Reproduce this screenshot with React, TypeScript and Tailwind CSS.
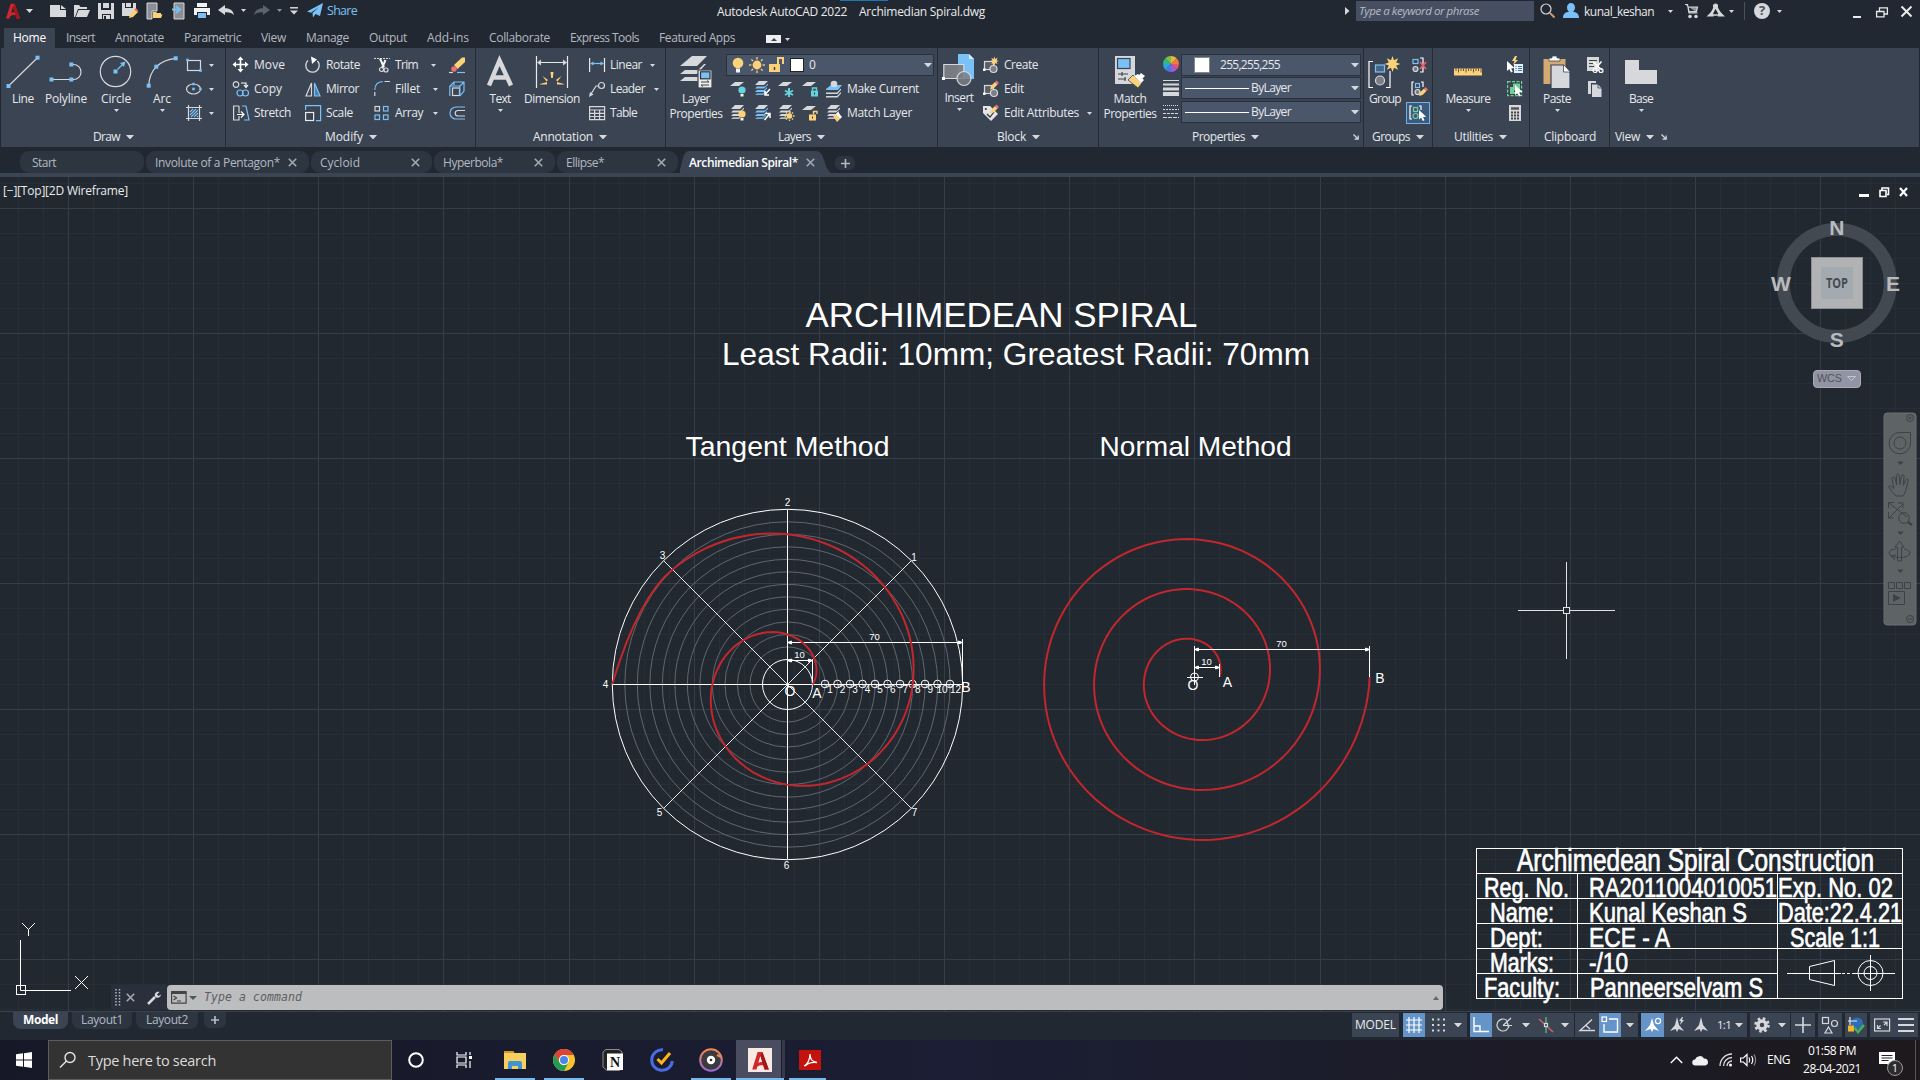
import React, { useLayoutEffect, useRef, useState } from "react";

const BLUE = "#7ac1f8";
const GREY = "#d6d8db";
const YEL = "#fbd27a";

/* Single-line label whose tracking is fitted to a given width. */
function T({ w, className = "", children }: { w?: number; className?: string; children: string }) {
  const ref = useRef<HTMLSpanElement>(null);
  const [track, setTrack] = useState(0);
  useLayoutEffect(() => {
    if (!w || !ref.current) return;
    const natural = ref.current.getBoundingClientRect().width;
    setTrack((w - natural) / children.length);
  }, [w, children]);
  return (
    <span ref={ref} className={`inline-block shrink-0 whitespace-nowrap ${className}`} style={{ letterSpacing: track }}>
      {children}
    </span>
  );
}

function Svg({ w = 16, h = 16, className = "", children }: { w?: number; h?: number; className?: string; children: React.ReactNode }) {
  return (
    <svg width={w} height={h} viewBox={`0 0 ${w} ${h}`} fill="none" stroke={GREY} strokeWidth="1.2" className={`block shrink-0 overflow-visible ${className}`}>
      {children}
    </svg>
  );
}

function Down({ className = "", s = 6 }: { className?: string; s?: number }) {
  return (
    <svg width={s} height={s / 2 + 0.5} viewBox="0 0 8 4" preserveAspectRatio="none" className={`block shrink-0 ${className}`}>
      <path d="M0 0H8L4 4z" fill="#d6d8db" />
    </svg>
  );
}

const Dot = ({ x, y, s = 4 }: { x: number; y: number; s?: number }) => (
  <rect x={x - s / 2} y={y - s / 2} width={s} height={s} fill={BLUE} stroke="none" />
);

/* ---------- title bar ---------- */

function ALogo({ w = 14, h = 16, className = "" }: { w?: number; h?: number; className?: string }) {
  return (
    <svg width={w} height={h} viewBox="0 0 14 16" className={`block shrink-0 ${className}`}>
      <path d="M0 15.5 4.6 0.8h4L14 15.5h-3.6l-1-3.4c-2-.4-3.4 0-5 1l-.8 2.4zM5.2 9.8c1.2-.6 2.2-.7 3.4-.5L6.9 4z" fill="#d0262d" />
      <path d="M8.6.8 14 15.5h-3.6L6.9 4z" fill="#a3161c" />
    </svg>
  );
}

function TitleBar() {
  return (
    <div className="relative flex h-7 items-start pt-[3px]">
      <ALogo className="ml-[6px]" />
      <Down className="ml-[6px] mt-[6px]" s={7} />
      <Svg className="ml-[17px]">
        <path d="M0 2h10v5h6v7H0z M11 2l5 4h-5z" fill={GREY} stroke="none" />
      </Svg>
      <Svg className="ml-2">
        <path d="M0 14V2h5l1.500 2H13v2H4L1 14z M4.600 7H16l-3 7H1.800z" fill={GREY} stroke="none" />
      </Svg>
      <Svg className="ml-2">
        <path d="M0 0h3v7h10V0h3v16h-3v-5H4v5H0z M5 0h6v5H5z M5 12h7v4H5z" fill={GREY} stroke="none" />
        <rect x="6" y="13" width="2" height="3" fill="#222831" stroke="none" />
      </Svg>
      <Svg className="ml-2">
        <path d="M0 0h3v5h8V0h3v8l-6 5H0z M4 0h5v4H4z" fill={GREY} stroke="none" />
        <path d="M7 15l1-4 5-5 3 3-5 5z" fill={YEL} stroke="none" />
        <path d="M12.500 6.500l1.500-1.500 2.500 3-1.500 1z" fill="#e96a6a" stroke="none" />
      </Svg>
      <Svg className="ml-[9px]">
        <path d="M0 0h10v8H5v8H0z" fill="#8b8e93" stroke={GREY} strokeWidth="1" />
        <path d="M6 15V9h3l1 1h4v1.500h1.500L14 15z" fill={YEL} stroke="none" />
      </Svg>
      <Svg className="ml-[9px]" w={13}>
        <path d="M2 0h10v16H2z" fill="#8b8e93" stroke={GREY} strokeWidth="1" />
        <path d="M0 6.500h6M4 3l4 3.500L4 10" stroke={BLUE} strokeWidth="2" />
      </Svg>
      <Svg className="ml-[9px]">
        <path d="M3 0h10v4H3z M0 5h16v7h-3V9H3v3H0z" fill="#f2f3f4" stroke="none" />
        <path d="M4 10h8v5H4z" fill={BLUE} stroke="none" />
      </Svg>
      <Svg className="ml-2">
        <path d="M0 7l7-5v3.200c5 0 8 2 9 7-2-2.600-5-3.200-9-3V12z" fill={GREY} stroke="none" />
      </Svg>
      <Down className="ml-[7px] mt-[6px]" s={5} />
      <Svg className="ml-2">
        <path d="M16 7L9 2v3.200c-5 0-8 2-9 7 2-2.600 5-3.200 9-3V12z" fill="#5d636c" stroke="none" />
      </Svg>
      <Down className="ml-[7px] mt-[6px] opacity-60" s={5} />
      <Svg className="ml-2 mt-[4px]" w={8} h={8}>
        <path d="M0 .8h8" strokeWidth="1.500" />
        <path d="M0 3.500h8L4 7.500z" fill={GREY} stroke="none" />
      </Svg>
      <Svg className="ml-[9px]">
        <path d="M0 8.500L16 0l-3 13-4.500-2L6 14.500 5.500 10 12 4 4 9.800z" fill={BLUE} stroke="none" />
      </Svg>
      <T w={30} className="ml-1 text-[12.5px] leading-4 text-[#7ac1f8]">Share</T>
      <T w={130} className="ml-[360px] text-[12px] leading-[18px] text-[#e8eaec]">Autodesk AutoCAD 2022</T>
      <T w={126} className="ml-3 text-[12px] leading-[18px] text-[#e8eaec]">Archimedian Spiral.dwg</T>
      <Svg className="ml-[360px] mt-[4px]" w={5} h={8}>
        <path d="M0 0l4.500 4L0 8z" fill={GREY} stroke="none" />
      </Svg>
      <div className="-mt-[2px] ml-[6px] flex h-5 w-[178px] items-center bg-[#464f61] pl-[3px]">
        <T w={120} className="text-[11.5px] italic text-[#b6bbc4]">Type a keyword or phrase</T>
      </div>
      <Svg className="ml-1.5">
        <circle cx="6" cy="6" r="5" />
        <path d="M10 10l4.500 4.500" stroke="#c59a74" strokeWidth="2" />
      </Svg>
      <Svg className="ml-[7px]">
        <path d="M4 4.500a4 4.500 0 0 1 8 0c0 2-1 3.500-2 4.200 3.500.6 6 1.800 6 6.300H0C0 10.500 2.500 9.300 6 8.700 5 8 4 6.500 4 4.500z" fill={BLUE} stroke="none" />
      </Svg>
      <T w={70} className="ml-[5px] text-[12px] leading-[18px] text-[#e8eaec]">kunal_keshan</T>
      <Down className="ml-[14px] mt-[7px]" s={5} />
      <Svg className="ml-3">
        <path d="M0 1.500h2.500L4 10h8.500M3 4h9.500l-1 4.500H4z" fill="#8f949b" />
        <circle cx="5" cy="13.500" r="1.200" fill={GREY} />
        <circle cx="11" cy="13.500" r="1.200" fill={GREY} />
      </Svg>
      <Svg className="ml-[7px]">
        <path d="M7.500 3L3 12M7.500 3l5 9" strokeWidth="2.600" />
        <path d="M2 12h11" strokeWidth="1.500" />
        <path d="M0 13l4-4 1 4zM15.500 13l-4-4-1 4z" fill={GREY} />
        <circle cx="7.500" cy="3" r="2" fill={GREY} />
      </Svg>
      <Down className="ml-[5px] mt-[7px]" s={5} />
      <div className="-mt-px ml-[10px] h-[18px] w-px bg-[#4a515d]" />
      <div className="ml-[9px] flex size-4 items-center justify-center rounded-full bg-[#d6d8db] text-[13px] font-bold text-[#4a515d]">?</div>
      <Down className="ml-[7px] mt-[7px]" s={5} />
      <div className="ml-[71px] mt-[13px] h-[2px] w-2 bg-[#e8eaec]" />
      <Svg className="ml-[15px] mt-[4px]" w={12} h={11}>
        <path d="M3.500 4V.8H11.400V7H8M.6 4.500H8v5.400H.6z" stroke="#e8eaec" strokeWidth="1.300" />
      </Svg>
      <Svg className="ml-[13px] mt-[3px]" w={11} h={11}>
        <path d="M.5.5l10 10M10.500.5l-10 10" stroke="#e8eaec" strokeWidth="2" />
      </Svg>
      <div className="absolute left-[840px] top-0 h-px w-12 bg-[#1f74b5]" />
    </div>
  );
}

const MENU: [string, number][] = [
  ["Insert", 29], ["Annotate", 49], ["Parametric", 57], ["View", 25], ["Manage", 43], ["Output", 38],
  ["Add-ins", 42], ["Collaborate", 61], ["Express Tools", 69], ["Featured Apps", 76],
];

function MenuTabs() {
  return (
    <div className="flex h-5 items-center pl-1">
      <div className="flex h-5 w-[51px] items-center justify-center bg-[#3b4453]">
        <T w={33} className="text-[12px] text-white">Home</T>
      </div>
      <div className="ml-[11px] flex gap-5">
        {MENU.map(([t, w]) => (
          <T key={t} w={w} className="text-[12px] text-[#b4b9c1]">{t}</T>
        ))}
      </div>
      <div className="ml-[31px] mt-[2px] flex h-2 w-[15px] items-center justify-center bg-[#eceef0]">
        <svg width="6" height="3" viewBox="0 0 6 3"><path d="M0 3L3 0l3 3z" fill="#444" /></svg>
      </div>
      <Down className="ml-1 mt-[2px]" s={5} />
    </div>
  );
}

/* ---------- ribbon ---------- */

function Panel({ w, title, tw, pad, arrow = true, launch, children }: { w: string; title: string; tw: number; pad: string; arrow?: boolean; launch?: string; children: React.ReactNode }) {
  return (
    <div className={`flex h-[99px] shrink-0 flex-col border-r border-[#252b35] ${w}`}>
      <div className="flex h-20 items-start">{children}</div>
      <div className={`flex h-[18px] items-center ${pad}`}>
        <T w={tw} className="text-[12px] text-[#e6e8eb]">{title}</T>
        {arrow && <Down className="ml-1.5" s={8} />}
        {launch && (
          <Svg w={6} h={6} className={launch}>
            <path d="M.5.5l4 4M5.200 1.500v3.700H1.500" strokeWidth="1.200" />
          </Svg>
        )}
      </div>
    </div>
  );
}

function Big({ w, label, lw, arrow, className = "", children }: { w: string; label: string[]; lw: number[]; arrow?: boolean; className?: string; children: React.ReactNode }) {
  return (
    <div className={`flex shrink-0 flex-col items-center pt-2 ${w} ${className}`}>
      <Svg w={32} h={32}>{children}</Svg>
      <div className="mt-[3px] flex flex-col items-center">
        {label.map((l, i) => (
          <T key={l} w={lw[i]} className="text-[12px] leading-[15px] text-[#e6e8eb]">{l}</T>
        ))}
      </div>
      {arrow && <Down className="mt-[3px]" s={5} />}
    </div>
  );
}

function Col({ className = "", children }: { className?: string; children: React.ReactNode }) {
  return <div className={`flex shrink-0 flex-col pt-[5px] ${className}`}>{children}</div>;
}

function Row({ label, lw, arrow, children }: { label?: string; lw?: number; arrow?: string; children: React.ReactNode }) {
  return (
    <div className="flex h-6 items-center">
      <Svg>{children}</Svg>
      {label && <T w={lw} className="ml-[5px] text-[12px] text-[#e6e8eb]">{label}</T>}
      {arrow && <Down className={arrow} s={5} />}
    </div>
  );
}

const Sheet = ({ y = 2, c = GREY }: { y?: number; c?: string }) => (
  <path d={`M0 ${y + 4}l5-4h9l-5 4z`} fill={c} stroke="none" />
);
const Sheets = ({ c = GREY }: { c?: string }) => (
  <g stroke="none">
    <path d="M1 4l4-4h9l-4 4z" fill={GREY} />
    <path d="M1 7.500L3 5.500h8l3-3v1.500L10 7.500zM1 11L3 9h7l3-3v1.600L10 11z" fill={c} />
    <path d="M1 14l2-1.700h6L12 9.500V11L9 14z" fill={c} opacity=".8" />
  </g>
);
const Star = ({ x, y, r }: { x: number; y: number; r: number }) => {
  const pts = Array.from({ length: 16 }, (_, i) => {
    const q = i % 2 ? r * 0.5 : r;
    const a = (i * Math.PI) / 8;
    return `${x + q * Math.sin(a)},${y - q * Math.cos(a)}`;
  }).join(" ");
  return <polygon points={pts} fill={YEL} stroke="none" />;
};
const Pencil = ({ x, y }: { x: number; y: number }) => (
  <g transform={`translate(${x} ${y})`} stroke="none">
    <path d="M0 9l1-3.500L5 1.500l2.500 2.500-4 4z" fill={YEL} />
    <path d="M5 1.500L6.500 0 9 2.500 7.500 4z" fill="#ee7070" />
  </g>
);
const Cursor = ({ x, y, s = 1 }: { x: number; y: number; s?: number }) => (
  <path transform={`translate(${x} ${y}) scale(${s})`} d="M0 0v10l2.300-2L4 11.500l1.800-.8L4.200 7.400 7.500 7z" fill="#fff" stroke="none" />
);
const Bulb = ({ x, y, c }: { x: number; y: number; c: string }) => (
  <g stroke="none">
    <circle cx={x} cy={y} r="3.600" fill={c} />
    <rect x={x - 1.5} y={y + 4} width="3" height="2.500" fill="#f2f3f4" />
  </g>
);
const Lock = ({ x, y, c, open }: { x: number; y: number; c: string; open?: boolean }) => (
  <g>
    <rect x={x} y={y + 3} width="7" height="6" fill={c} stroke="none" />
    <path d={open ? `M${x + 4.5} ${y + 3}V${y}h3.500v2.500` : `M${x + 1.5} ${y + 3}V${y + 0.5}h4V${y + 3}`} stroke={c} strokeWidth="1.400" />
    <rect x={x + 3} y={y + 5} width="1" height="2" fill="#333" stroke="none" />
  </g>
);
const Sun = ({ x, y, r, c = YEL }: { x: number; y: number; r: number; c?: string }) => (
  <g stroke={c}>
    <circle cx={x} cy={y} r={r * 0.55} fill={c} stroke="none" />
    {[0, 45, 90, 135, 180, 225, 270, 315].map((a) => (
      <path key={a} d={`M${x} ${y - r}v${r * 0.3}`} transform={`rotate(${a} ${x} ${y})`} strokeWidth="1.300" />
    ))}
  </g>
);

function Combo({ className = "", children }: { className?: string; children: React.ReactNode }) {
  return <div className={`flex items-center border border-[#2a313c] bg-[#4a566a] ${className}`}>{children}</div>;
}

function Ribbon() {
  return (
    <div className="ml-px mr-px flex h-[99px] bg-[#3b4453]">
      <Panel w="w-[225px]" title="Draw" tw={27} pad="pl-[92px]">
        <Big w="w-[44px]" label={["Line"]} lw={[22]}>
          <path d="M1.500 30L30.500 1.700" />
          <Dot x={1.5} y={30} /><Dot x={30.5} y={1.7} />
        </Big>
        <Big w="w-[42px]" label={["Polyline"]} lw={[42]}>
          <path d="M1.500 23.500H23.500a7.500 7.500 0 0 0 0-15H21" />
          <Dot x={1.5} y={23.5} /><Dot x={21.3} y={23.5} /><Dot x={21.3} y={8.5} />
        </Big>
        <Big w="w-[42px]" className="ml-2" label={["Circle"]} lw={[30]} arrow>
          <circle cx="15.500" cy="15.500" r="15.200" />
          <Dot x={15.5} y={15.5} />
          <path d="M17.500 13.500L24 7" stroke={BLUE} />
          <path d="M25.500 5.500l-1.500 5.500-4-4z" fill={BLUE} stroke="none" />
        </Big>
        <Big w="w-[42px]" className="ml-1" label={["Arc"]} lw={[18]} arrow>
          <path d="M2.700 29.700Q3.200 18 10.300 10.700Q18 3.300 29.700 2.300" />
          <Dot x={2.7} y={29.7} /><Dot x={10.3} y={10.7} /><Dot x={29.7} y={2.3} />
        </Big>
        <Col className="ml-[3px]">
          <Row arrow="ml-[7px]">
            <rect x="1.500" y="3.500" width="13" height="10" />
            <Dot x={1.5} y={3} s={2.6} /><Dot x={14.5} y={13.5} s={2.6} />
          </Row>
          <Row arrow="ml-[7px]">
            <ellipse cx="7.500" cy="8" rx="7" ry="5" />
            <Dot x={7.5} y={3} s={2.4} /><Dot x={14.5} y={8} s={2.4} /><Dot x={7.5} y={8} s={2.6} />
          </Row>
          <Row arrow="ml-[7px]">
            <path d="M2.500 0v16M13.500 0v16M0 2.500h16M0 13.500h16" />
            <path d="M4 7l3-3M4 10l6-6M5 12l7-7M8 12l4-4M11 12l1-1" stroke={BLUE} />
          </Row>
        </Col>
      </Panel>

      <Panel w="w-[250px]" title="Modify" tw={38} pad="pl-[99px]">
        <Col className="ml-[7px] w-[72px]">
          <Row label="Move" lw={31}>
            <path d="M7.500 1v13M1 7.500h13" strokeWidth="1.700" stroke="#fff" />
            <path d="M7.500-.5l3 3.500h-6zM7.500 15.500l3-3.500h-6zM-.5 7.500l3.500-3v6zM15.500 7.500L12 4.500v6z" fill="#fff" stroke="none" />
          </Row>
          <Row label="Copy" lw={28}>
            <circle cx="3" cy="3.500" r="2.800" />
            <path d="M8 2h5v3M11 4l2 2.500L15 4" stroke="#fff" />
            <circle cx="7" cy="12" r="3" stroke={BLUE} /><circle cx="12.500" cy="12" r="3" stroke={BLUE} />
          </Row>
          <Row label="Stretch" lw={37}>
            <path d="M6 1H.6v14H6v-4" /><path d="M6 1v7" />
            <path d="M9 1h4l3 14H11" stroke={BLUE} />
            <path d="M4 9.500h7M8 6.500l3 3-3 3" stroke="#fff" />
          </Row>
        </Col>
        <Col className="w-[69px]">
          <Row label="Rotate" lw={34}>
            <path d="M3 3.500A6.700 6.700 0 1 0 12.500 4" strokeWidth="1.400" />
            <path d="M6-.5l6 3-5 4.500z" fill="#fff" stroke="none" />
          </Row>
          <Row label="Mirror" lw={33}>
            <path d="M6.500 2v13H1z" />
            <path d="M9.500 2v13H15z" stroke={BLUE} fill="#4f7fa6" />
          </Row>
          <Row label="Scale" lw={27}>
            <rect x=".6" y="7.500" width="8" height="8" stroke="#e8eaec" />
            <path d="M.6 5V.6h15v15H11" stroke={BLUE} />
          </Row>
        </Col>
        <Col className="w-[75px]">
          <Row label="Trim" lw={23} arrow="ml-[13px]">
            <path d="M0 1.500h16" strokeDasharray="2 1" />
            <path d="M6 1.500l4 9M11.500 3L8 11" strokeWidth="2" stroke="#f4f5f6" />
            <circle cx="7.500" cy="12.500" r="2" /><circle cx="12" cy="13" r="2" />
          </Row>
          <Row label="Fillet" lw={25} arrow="ml-[13px]">
            <path d="M.8 9q0-8 8-8.500" stroke={BLUE} />
            <path d="M.8 11v4M10.500.5H16" />
          </Row>
          <Row label="Array" lw={28} arrow="ml-[10px]">
            <rect x="1" y="1.500" width="4.500" height="4.500" />
            <rect x="9.500" y="1.500" width="4.500" height="4.500" stroke={BLUE} />
            <rect x="1" y="10" width="4.500" height="4.500" stroke={BLUE} />
            <rect x="9.500" y="10" width="4.500" height="4.500" stroke={BLUE} />
          </Row>
        </Col>
        <Col>
          <Row>
            <path d="M5 8L13 .5h3V5L8.500 12z" fill={YEL} stroke="none" />
            <circle cx="5" cy="12" r="2.800" fill="#ee7070" stroke="none" />
            <path d="M0 15.500h4" /><path d="M8 15.500h8" stroke={BLUE} />
          </Row>
          <Row>
            <path d="M1 5l4-4h10v9l-4 5M15 1l-4 4M5 1v3" stroke={BLUE} />
            <rect x="3.500" y="7" width="7" height="7.500" /><path d="M.8 5h10v10" stroke={BLUE} /><path d="M.8 5v10" stroke={BLUE} />
          </Row>
          <Row>
            <path d="M16 2H7a6 6 0 0 0 0 12h9" stroke={BLUE} />
            <path d="M16 5.500H8.500a2.800 2.800 0 0 0 0 5.500H16" />
          </Row>
        </Col>
      </Panel>

      <Panel w="w-[190px]" title="Annotation" tw={60} pad="pl-[57px]">
        <Big w="w-[42px]" className="ml-[3px]" label={["Text"]} lw={[21]} arrow>
          <path d="M5 29.500L15.500 4.500L27 29.500M8.500 21.500h15" strokeWidth="4.500" />
        </Big>
        <Big w="w-[58px]" className="ml-[2px]" label={["Dimension"]} lw={[56]}>
          <path d="M.5 0v32M31.500 0v32M2 6.500h28" stroke="#e8eaec" />
          <path d="M1 6.500l4-3v6zM31 6.500l-4-3v6z" fill={GREY} stroke="none" />
          <g fill={YEL} stroke="none">
            <path d="M4 28l7-2v2.500H4zM28 28l-7-2v2.500h7zM14.500 16h3l-.7 6h-1.600zM6.500 20l5.500 4-1.500 1.500zM25.500 20L20 24l1.500 1.500z" />
          </g>
        </Big>
        <Col className="ml-2">
          <Row label="Linear" lw={32} arrow="ml-2">
            <path d="M.6 1v14M15.500 1v14" stroke="#e8eaec" /><path d="M2 6.500h12" stroke={BLUE} /><path d="M1 6.500l3.500-2v4zM15 6.500l-3.500-2v4z" fill={BLUE} stroke="none" />
          </Row>
          <Row label="Leader" lw={35} arrow="ml-[9px]">
            <circle cx="12.500" cy="4.500" r="3" /><path d="M9.500 5H7L2 13" /><path d="M0 16l1-5 3.500 2.500z" fill={GREY} stroke="none" />
          </Row>
          <Row label="Table" lw={27}>
            <path d="M.6 1.600h15v13H.6zM.6 5h15M.6 8.300h15M.6 11.500h15M5.600 5v9.600M10.600 5v9.600" />
          </Row>
        </Col>
      </Panel>

      <Panel w="w-[272px]" title="Layers" tw={33} pad="pl-[112px]">
        <Big w="w-[54px]" className="ml-[3px]" label={["Layer", "Properties"]} lw={[28, 53]}>
          <path d="M0 10L12 0h15L17 10z M0 18l5-4h13l6-6h2L17 18z M0 25l5-4h13v4z" fill={GREY} stroke="none" />
          <rect x="18" y="14" width="14" height="18" fill="#ececec" stroke="#3b4453" />
          <rect x="20.500" y="15.800" width="9.500" height="7" fill={BLUE} stroke="#333" />
          <path d="M21 26h8M21 29h8M27 24.500l2 1.500M23 30.500L21 29" stroke="#444" strokeWidth="1" />
        </Big>
        <div className="ml-[3px] flex flex-col pt-[6px]">
          <Combo className="h-[22px] w-[208px]">
            <Svg className="ml-[5px]" w={12}>
              <circle cx="6" cy="6" r="5.300" fill={YEL} stroke="none" /><rect x="4" y="11.500" width="4" height="4" fill="#f2f3f4" stroke="none" />
            </Svg>
            <Svg className="ml-[5px]"><Sun x={8} y={8} r={8} /></Svg>
            <Svg className="ml-1">
              <path d="M0 7h11v8H0z" fill={YEL} stroke="none" /><path d="M9 7V1h5v6" stroke={YEL} strokeWidth="2" /><path d="M5.500 10v3" stroke="#444" strokeWidth="1.500" />
            </Svg>
            <div className="ml-[5px] size-[14px] border border-[#222] bg-white" />
            <T className="ml-[5px] text-[12px] text-[#e6e8eb]">0</T>
            <Down className="ml-auto mr-[1px]" s={8} />
          </Combo>
          <div className="ml-1 mt-[1px] flex h-6 items-center">
            <Svg><Sheet y={1} /><Bulb x={12} y={9} c="#63d3dd" /></Svg>
            <Svg className="ml-2"><Sheets c={BLUE} /><path d="M16 8l-4.500 5M11 10v4h4" stroke="#fff" strokeWidth="1.500" /></Svg>
            <Svg className="ml-2"><Sheet y={1} /><path d="M11 7v9M7 9.500l8 4.500M15 9.500L7 14" stroke="#63d3dd" strokeWidth="2" /></Svg>
            <Svg className="ml-2"><Sheet y={1} /><Lock x={9} y={6.5} c="#63d3dd" /></Svg>
            <Svg className="ml-2"><path d="M0 8l5-4h11l-4 5H0z" fill={BLUE} stroke="none" /><path d="M0 11.500h11l4-4v1.500L11.500 13H0zM0 15h11l4-4v1.500L11.500 16.500H0z" fill={GREY} stroke="none" /><circle cx="8" cy="3" r="3.300" fill={GREY} stroke="none" /></Svg>
            <T w={72} className="ml-[5px] text-[12px] text-[#e6e8eb]">Make Current</T>
          </div>
          <div className="ml-1 flex h-6 items-center">
            <Svg><Sheets /><Bulb x={12} y={9} c={YEL} /></Svg>
            <Svg className="ml-2"><Sheets c={BLUE} /><path d="M10.500 15l5-6M11.500 8.500H16V13" stroke="#fff" strokeWidth="1.500" /></Svg>
            <Svg className="ml-2"><Sheets /><Sun x={11.5} y={11} r={5} /></Svg>
            <Svg className="ml-2"><Sheet y={1} /><Lock x={7} y={6.5} c={YEL} open /></Svg>
            <Svg className="ml-2"><Sheets /><path d="M7 11l3-2 4 5-3 3z" fill={YEL} stroke="none" /><path d="M10 9l2-2 4 5-2 2z" fill="#fff" stroke="none" /></Svg>
            <T w={65} className="ml-[5px] text-[12px] text-[#e6e8eb]">Match Layer</T>
          </div>
        </div>
      </Panel>

      <Panel w="w-[161px]" title="Block" tw={29} pad="pl-[59px]">
        <Big w="w-[36px]" className="-mt-px ml-[3px]" label={["Insert"]} lw={[29]} arrow>
          <path d="M15-1h11l5 5v20H15z" fill={BLUE} stroke="none" /><path d="M26-1v5h5z" fill="#d6ecff" stroke="none" />
          <path d="M.8 9.500h20v14H.8z" fill="#7b7e85" fillOpacity=".95" /><circle cx="21" cy="23.500" r="7" fill="#7b7e85" fillOpacity=".85" />
          <rect x="-1" y="22" width="3" height="3" fill="#fff" stroke="none" />
        </Big>
        <Col className="ml-[6px]">
          <Row label="Create" lw={34}>
            <rect x="1.500" y="4.500" width="9" height="8" fill="#5b5f68" /><circle cx="10.500" cy="12" r="3.500" fill="#7b7e85" /><Star x={11.5} y={4} r={4.5} /><rect x="0" y="11.500" width="2.500" height="2.500" fill="#fff" stroke="none" />
          </Row>
          <Row label="Edit" lw={20}>
            <rect x="1.500" y="4.500" width="9" height="8" fill="#5b5f68" /><circle cx="11" cy="12" r="3.500" fill="#7b7e85" /><Pencil x={7} y={-0.5} /><rect x="0" y="11.500" width="2.500" height="2.500" fill="#fff" stroke="none" />
          </Row>
          <Row label="Edit Attributes" lw={75} arrow="ml-[8px]">
            <path d="M0 1h7l8 8-7 7-8-8z" fill="#e4e5e7" stroke="none" /><circle cx="2.800" cy="4" r="1" fill="#333" stroke="none" /><path d="M4 9l3 3 4-5" stroke="#333" /><Pencil x={7} y={-0.5} />
          </Row>
        </Col>
      </Panel>

      <Panel w="w-[265px]" title="Properties" tw={53} pad="pl-[93px]" launch="ml-[94px]">
        <Big w="w-[54px]" className="ml-1" label={["Match", "Properties"]} lw={[33, 53]}>
          <rect x="1" y="0" width="20" height="28" fill={GREY} stroke="none" /><rect x="3.500" y="2.500" width="12.500" height="10" fill={BLUE} stroke="#3b4453" />
          <path d="M4 18h10M4 23h8M8 16v4M11 21v4" stroke="#444" />
          <path d="M14 24l5-5 9 8-4 5z" fill={YEL} stroke="#3b4453" strokeWidth=".8" /><path d="M20 20l4-2 6 6-3 3z M24 20l3-3 4 3-3 3z" fill="#fff" stroke="none" />
        </Big>
        <div className="ml-[6px] flex flex-col pt-2">
          <Svg>
            {["#f2b33d", "#ef7d3c", "#e25573", "#9b5de5", "#4a78e0", "#2aa7d8", "#2fb98a", "#7cc04b"].map((c, i) => {
              const a = (i * Math.PI) / 4, b = ((i + 1) * Math.PI) / 4;
              return <path key={c} d={`M8 8L${8 + 8 * Math.sin(a)} ${8 - 8 * Math.cos(a)}A8 8 0 0 1 ${8 + 8 * Math.sin(b)} ${8 - 8 * Math.cos(b)}z`} fill={c} stroke="none" />;
            })}
          </Svg>
          <Svg className="mt-2"><path d="M0 .5h16" strokeWidth="1" /><path d="M0 4.500h16" strokeWidth="2" /><path d="M0 9h16" strokeWidth="3" /><path d="M0 14h16" strokeWidth="4" /></Svg>
          <Svg className="mt-2"><path d="M0 1.500h16" strokeDasharray="1 1" /><path d="M0 5.500h16" strokeDasharray="2 1" /><path d="M0 9.500h16" strokeDasharray="3 1" /><path d="M0 13.500h16" strokeDasharray="4 1" /></Svg>
        </div>
        <div className="ml-[2px] flex flex-col pt-[6px]">
          <Combo className="h-[22px] w-[180px]">
            <div className="ml-3 size-4 border border-[#888] bg-white" />
            <T w={60} className="ml-[10px] text-[12px] text-[#e6e8eb]">255,255,255</T>
            <Down className="ml-auto mr-[1px]" s={8} />
          </Combo>
          {["mt-px", "mt-[2px]"].map((k) => (
            <Combo key={k} className={`h-[22px] w-[180px] ${k}`}>
              <div className="ml-[3px] h-px w-16 bg-white" />
              <T w={40} className="ml-[2px] text-[12px] text-[#e6e8eb]">ByLayer</T>
              <Down className="ml-auto mr-[1px]" s={8} />
            </Combo>
          ))}
        </div>
      </Panel>

      <Panel w="w-[69px]" title="Groups" tw={38} pad="pl-[8px]">
        <Big w="w-[40px]" className="ml-px" label={["Group"]} lw={[32]}>
          <path d="M4 5.500H0v26h4M17 31.500h4V15" stroke="#fff" />
          <rect x="6.500" y="9" width="9" height="7" stroke={BLUE} fill="#476583" /><circle cx="11" cy="24.500" r="4.500" fill="#7b7e85" /><Star x={23.5} y={8} r={8} />
        </Big>
        <div className="ml-px flex flex-col items-center pt-[5px]">
          <div className="ml-[3px] flex h-6 items-center"><Svg><rect x="1" y="2.500" width="5" height="4" stroke={BLUE} /><circle cx="3.500" cy="12" r="2.500" fill="#7b7e85" /><path d="M8 1h3v14H8" stroke="#fff" /><path d="M8 5l6 7M14 5l-6 7" stroke="#ea5f6a" strokeWidth="1.800" /></Svg></div>
          <div className="ml-[3px] flex h-6 items-center"><Svg><path d="M2 1H0v13h2M9 1h2v5" stroke="#fff" /><rect x="3.500" y="2.500" width="4" height="4" stroke={BLUE} /><circle cx="5.500" cy="11" r="2.500" fill="#7b7e85" /><Pencil x={7} y={6} /></Svg></div>
          <div className="mt-px flex h-[22px] w-6 items-center justify-center border border-[#70b4ea] bg-[#3d5a7c]"><Svg><path d="M2 1H0v13h2M9 1h2v4" stroke="#fff" /><rect x="3.500" y="2.500" width="4" height="4" stroke="#6fcf97" /><circle cx="5.500" cy="11" r="2.500" stroke="#6fcf97" /><Cursor x={9} y={5} s={0.95} /></Svg></div>
        </div>
      </Panel>

      <Panel w="w-[97px]" title="Utilities" tw={39} pad="pl-[21px]">
        <Big w="w-[46px]" className="ml-[12px]" label={["Measure"]} lw={[45]} arrow>
          <path d="M2 12.500h28v7H2z" fill={YEL} stroke="none" />
          <path d="M4 12.500v2.500M6.500 12.500v4M9 12.500v2.500M11.500 12.500v2.500M14 12.500v4M16.500 12.500v2.500M19 12.500v2.500M21.500 12.500v4M24 12.500v2.500M26.500 12.500v2.500M29 12.500v4" stroke="#544a38" strokeWidth=".9" />
        </Big>
        <Col className="ml-[16px]">
          <Row><rect x="7" y="7" width="9" height="9" fill="#e9f2fb" stroke="none" /><path d="M8.500 9.500h1M8.500 11.500h1M8.500 13.500h1M11 9.500h4M11 11.500h4M11 13.500h4" stroke="#3277b5" strokeWidth="1" /><Cursor x={0} y={4} /><path d="M8-1L5 4h2.500L6 8l5-5H8.500L10-1z" fill={YEL} stroke="none" /></Row>
          <Row><rect x=".6" y=".6" width="14" height="14" stroke="#6fcf97" strokeDasharray="3 1.500" /><path d="M3 6h4v5h4v2H3zM6 2.500h7v7H6z" fill="#6fcf97" stroke="none" /><Cursor x={8} y={4} /></Row>
          <Row><rect x="2" y="0" width="12" height="16" fill={GREY} stroke="none" /><path d="M4 3.500h8" stroke="#555" strokeWidth="2.500" /><path d="M4 7.500h8M4 10.500h8M4 13.500h8" stroke="#444" strokeWidth="2" strokeDasharray="2 1" /></Row>
        </Col>
      </Panel>

      <Panel w="w-[80px]" title="Clipboard" tw={52} pad="pl-[14px]" arrow={false}>
        <Big w="w-[40px]" className="ml-[7px]" label={["Paste"]} lw={[28]} arrow>
          <path d="M2.500 3h22v25h-22z" fill="#d3a974" stroke="none" /><path d="M8 2h3V0h5v2h3v3H8z" fill="#fff" stroke="#3b4453" strokeWidth=".8" />
          <path d="M10 9h12.500l6.500 6.500V32.500H10z" fill={GREY} stroke="#3b4453" /><path d="M22.500 9v7H29" fill="#fff" stroke="#3b4453" strokeWidth=".8" />
        </Big>
        <Col className="ml-[10px]">
          <Row><path d="M0 0h12v14H0z" fill={GREY} stroke="none" /><path d="M2 3.500h8M2 6.500h4M2 9.500h5" stroke="#444" /><path d="M6 5l9 8M14.500 4.500L8 12" stroke="#fff" strokeWidth="1.500" /><circle cx="8" cy="13.500" r="2" stroke="#fff" /><circle cx="14" cy="13.500" r="2" stroke="#fff" /></Row>
          <Row><path d="M1 0h8v2H4v11H1z" fill={GREY} stroke="none" /><path d="M5 3.500h6l3.500 3.500v9H5z" fill={GREY} stroke="none" /><path d="M11 3v4h4" stroke="#3b4453" strokeWidth=".8" /></Row>
        </Col>
      </Panel>

      <div className="flex h-[99px] flex-col">
        <div className="flex h-20 items-start">
          <Big w="w-[40px]" className="ml-[11px]" label={["Base"]} lw={[24]} arrow>
            <path d="M0 4h14v10h18v14H0z" fill={GREY} stroke="none" />
          </Big>
        </div>
        <div className="flex h-[18px] items-center pl-[5px]">
          <T w={25} className="text-[12px] text-[#e6e8eb]">View</T>
          <Down className="ml-1.5" s={8} />
          <Svg w={6} h={6} className="ml-[7px]"><path d="M.5.5l4 4M5.200 1.500v3.700H1.500" /></Svg>
        </div>
      </div>
    </div>
  );
}

/* ---------- document tabs ---------- */

function Cross({ className = "", s = 9 }: { className?: string; s?: number }) {
  return (
    <Svg w={s} h={s} className={className}>
      <path d={`M.8.8l${s - 1.6} ${s - 1.6}M${s - 0.8} .8L.8 ${s - 0.8}`} stroke="#a4a9b1" strokeWidth="1.600" />
    </Svg>
  );
}

function DocTabs() {
  const tabs: { t: string; w: number; box: string; x?: string }[] = [
    { t: "Start", w: 24, box: "w-[124px] pl-3" },
    { t: "Involute of a Pentagon*", w: 125, box: "w-[163px] pl-[9px]", x: "ml-[8px]" },
    { t: "Cycloid", w: 40, box: "w-[121px] pl-[9px]", x: "ml-[51px]" },
    { t: "Hyperbola*", w: 60, box: "w-[121px] pl-[9px]", x: "ml-[31px]" },
    { t: "Ellipse*", w: 38, box: "w-[121px] pl-[9px]", x: "ml-[53px]" },
  ];
  return (
    <div className="flex h-[26px] items-end gap-[2px] pl-5">
      {tabs.map((d) => (
        <div key={d.t} className={`flex h-[22px] items-center rounded-[9px] bg-[#2d3541] pt-px ${d.box}`}>
          <T w={d.w} className="text-[12px] text-[#b4b9c1]">{d.t}</T>
          {d.x && <Cross className={d.x} />}
        </div>
      ))}
      <div className="relative flex h-[22px] w-[146px] items-center pl-[9px] pt-px">
        <svg className="absolute inset-0" width="150" height="22" viewBox="0 0 150 22">
          <path d="M-3 22C3 20 1 0 9 0H136C146 0 143 19 152 22z" fill="#3b4453" />
        </svg>
        <T w={109} className="relative text-[12px] font-semibold text-white">Archimedian Spiral*</T>
        <Cross className="relative ml-[8px]" />
      </div>
      <div className="mb-[3px] ml-[7px] flex h-[14px] w-5 items-center justify-center rounded-md bg-[#2d3541]">
        <Svg w={9} h={9}><path d="M4.500 0v9M0 4.500h9" stroke="#b4b9c1" strokeWidth="1.600" /></Svg>
      </div>
    </div>
  );
}

/* ---------- drawing area ---------- */

const MM = 2.503;
const GRID = 25.031;

function gridLines() {
  const out: React.ReactNode[] = [];
  const add = (major: boolean) => {
    for (let i = -3; i < 75; i++) {
      if ((i % 5 === 0) !== major) continue;
      const x = Math.round(68 + i * GRID) + 0.5;
      if (x > 0 && x < 1920) out.push(<path key={`v${i}`} d={`M${x} 177V1011`} stroke={major ? "#353d4a" : "#272e38"} />);
    }
    for (let j = -1; j < 33; j++) {
      if ((j % 5 === 0) !== major) continue;
      const y = Math.round(208 + j * GRID) + 0.5;
      if (y < 1011) out.push(<path key={`h${j}`} d={`M0 ${y}H1920`} stroke={major ? "#353d4a" : "#272e38"} />);
    }
  };
  add(false);
  add(true);
  return out;
}

function spiral(cx: number, cy: number, perTurn: number, endDeg: number) {
  const p: string[] = [];
  for (let a = 0; a <= endDeg; a += 3) {
    const r = (10 + (perTurn * a) / 360) * MM;
    const t = (a * Math.PI) / 180;
    p.push(`${(cx + r * Math.cos(t)).toFixed(2)} ${(cy - r * Math.sin(t)).toFixed(2)}`);
  }
  return "M" + p.join("L");
}

function DT({ x, y, s, w, bold, children }: { x: number; y: number; s: number; w?: number; bold?: boolean; children: string }) {
  return (
    <text x={x} y={y} fontSize={s} textLength={w} lengthAdjust="spacingAndGlyphs" fill="#fff" stroke={bold ? "#fff" : "none"} strokeWidth="0.700">
      {children}
    </text>
  );
}

function Dim({ x1, x2, y, label }: { x1: number; x2: number; y: number; label: string }) {
  return (
    <g stroke="#fff">
      <path d={`M${x1} ${y + 0.5}H${x2}`} />
      <path d={`M${x1} ${y + 0.5}l4-1.500v3zM${x2} ${y + 0.5}l-4-1.500v3z`} fill="#fff" />
      <text x={(x1 + x2) / 2 - 0.5} y={y - 2} fontSize="9.500" textAnchor="middle" fill="#fff" stroke="none">{label}</text>
    </g>
  );
}

function Drawing() {
  const cx = 787.5, cy = 684.5;
  const sx = 1194.5, sy = 677;
  const d = 175.2 * Math.SQRT1_2;
  const marks = ["'1", "'2", "'3", "'4", "'5", "'6", "'7", "'8", "'9", "10", "'12"];
  return (
    <svg width="1920" height="834" viewBox="0 177 1920 834" className="absolute inset-0 block" fill="none" strokeWidth="1" fontFamily='"Liberation Sans", Arial, sans-serif'>
      <g shapeRendering="crispEdges">{gridLines()}</g>

      <DT x={805.5} y={327} s={35} w={392}>ARCHIMEDEAN SPIRAL</DT>
      <DT x={722} y={364.5} s={30.5} w={588}>Least Radii: 10mm; Greatest Radii: 70mm</DT>
      <DT x={685.5} y={455.5} s={28} w={204}>Tangent Method</DT>
      <DT x={1099.5} y={455.5} s={28} w={192}>Normal Method</DT>

      {/* tangent method */}
      {Array.from({ length: 11 }, (_, i) => (
        <circle key={i} cx={cx} cy={cy} r={(15 + i * 5) * MM} stroke="#62676e" />
      ))}
      <g stroke="#fff">
        <circle cx={cx} cy={cy} r={175.2} />
        <circle cx={cx} cy={cy} r={25} />
        <path d={`M${cx - 175} ${cy}H${cx + 175}M${cx} ${cy - 175}V${cy + 175}`} />
        <path d={`M${cx - d} ${cy - d}L${cx + d} ${cy + d}M${cx - d} ${cy + d}L${cx + d} ${cy - d}`} strokeWidth="0.900" />
        {marks.map((m, i) => (
          <circle key={m} cx={825 + i * 12.5} cy={684} r="3.800" />
        ))}
        <path d={`M${cx + 25} 660V684M962.500 639V684`} />
      </g>
      <Dim x1={787.5} x2={812.5} y={660} label="10" />
      <Dim x1={787.5} x2={962.5} y={642} label="70" />
      <path d={spiral(cx, cy, 40, 495) + "Q638 598 612.300 684"} stroke="#c4262d" strokeWidth="2" />
      {marks.map((m, i) => (
        <text key={m} x={829 + i * 12.55} y="693" fontSize="10" textAnchor="middle" fill="#fff">{m}</text>
      ))}
      <g fill="#fff" fontSize="10" textAnchor="middle">
        <text x="914" y="561">1</text>
        <text x="787.500" y="506">2</text>
        <text x="662.500" y="558.500">3</text>
        <text x="605.500" y="687.500">4</text>
        <text x="659.500" y="816">5</text>
        <text x="786.500" y="869">6</text>
        <text x="914.500" y="816">7</text>
        <text x="790" y="696" fontSize="14">O</text>
        <text x="817" y="698" fontSize="14">A</text>
        <text x="966" y="692" fontSize="14">B</text>
      </g>

      {/* normal method */}
      <path d={spiral(sx, sy, 20, 1080)} stroke="#c4262d" strokeWidth="2" />
      <Dim x1={1194.5} x2={1219.5} y={667} label="10" />
      <Dim x1={1194.5} x2={1369.5} y={649} label="70" />
      <g stroke="#fff">
        <path d="M1194.500 646V685M1219.500 664V677M1369.500 646V677M1187 677.500h16" />
        <circle cx="1194.500" cy="677" r="4" />
      </g>
      <g fill="#fff" fontSize="14" textAnchor="middle">
        <text x="1193" y="690">O</text>
        <text x="1227.500" y="687">A</text>
        <text x="1380" y="683">B</text>
      </g>

      {/* crosshair cursor */}
      <g stroke="#dfe1e4" shapeRendering="crispEdges">
        <path d="M1518 610.500H1563M1569 610.500H1615M1566.500 562V607M1566.500 613V659" />
        <rect x="1563.500" y="607.500" width="6" height="6" />
      </g>

      {/* UCS icon */}
      <g stroke="#fff">
        <path d="M20.500 940V985M25 990.500H71" />
        <rect x="16.500" y="985.500" width="9" height="9" />
        <path d="M20.500 985v5.500H25" />
        <path d="M22 923l6.500 6.500L35 923M28.500 929.500V936M75 976l13 13M88 976l-13 13" />
      </g>

      {/* title block */}
      <g stroke="#fff" shapeRendering="crispEdges">
        <rect x="1476.500" y="848.500" width="426" height="150" />
        <path d="M1476.500 873.500h426M1476.500 898.500h426M1476.500 923.500h426M1476.500 948.500h426M1476.500 973.500h301M1577.500 873.500v125M1777.500 873.500v125" />
      </g>
      <DT bold x={1517} y={871} s={31.5} w={357}>Archimedean Spiral Construction</DT>
      <DT bold x={1484} y={897} s={27.5} w={85}>Reg. No.</DT>
      <DT bold x={1589} y={897} s={27.5} w={188}>RA2011004010051</DT>
      <DT bold x={1778} y={897} s={27.5} w={115}>Exp. No. 02</DT>
      <DT bold x={1490} y={922} s={27.5} w={64}>Name:</DT>
      <DT bold x={1589} y={922} s={27.5} w={158}>Kunal Keshan S</DT>
      <DT bold x={1778} y={922} s={27.5} w={124}>Date:22.4.21</DT>
      <DT bold x={1490} y={947} s={27.5} w={53}>Dept:</DT>
      <DT bold x={1589} y={947} s={27.5} w={81}>ECE - A</DT>
      <DT bold x={1790} y={947} s={27.5} w={90}>Scale 1:1</DT>
      <DT bold x={1490} y={972} s={27.5} w={64}>Marks:</DT>
      <DT bold x={1589} y={972} s={27.5} w={39}>-/10</DT>
      <DT bold x={1484} y={997} s={27.5} w={76}>Faculty:</DT>
      <DT bold x={1590} y={997} s={27.5} w={173}>Panneerselvam S</DT>
      <g stroke="#fff">
        <path d="M1787 973.500H1809M1809 973.500h32" /><path d="M1842 973.500h13" strokeDasharray="3 2" /><path d="M1853 973.500H1895M1870.500 955V991" />
        <path d="M1809.500 966.500L1834.500 960.500V985.500L1809.500 979.500z" />
        <circle cx="1870.500" cy="973" r="12.500" /><circle cx="1870.500" cy="973" r="6.500" />
      </g>

      {/* view cube */}
      <circle cx="1836.800" cy="283" r="53.500" stroke="#434951" strokeWidth="13" />
      <rect x="1811.500" y="257.500" width="51" height="51" fill="#b0b2b3" stroke="#8c8f92" />
      <rect x="1821" y="267" width="32" height="32" fill="#a3abb0" />
      <g fontWeight="700" textAnchor="middle" fill="#b9bcbf">
        <text x="1837" y="288" fontSize="14" textLength="22" lengthAdjust="spacingAndGlyphs" fill="#434a52" fontFamily='"Open Sans", sans-serif'>TOP</text>
        <text x="1836.800" y="234.500" fontSize="21">N</text>
        <text x="1836.800" y="347" fontSize="21">S</text>
        <text x="1781" y="290.500" fontSize="21">W</text>
        <text x="1893" y="290.500" fontSize="21">E</text>
      </g>
      <rect x="1813.500" y="370.500" width="47" height="17" rx="3.500" fill="#9294a4" stroke="#a6a9b6" />
      <text x="1817" y="382" fontSize="11" fill="#50535e" textLength="25" lengthAdjust="spacingAndGlyphs">WCS</text>
      <path d="M1847.500 376.500h8l-4 4z" stroke="#c3c5d0" />

      {/* navigation bar */}
      <rect x="1884" y="413" width="32" height="212" rx="3" fill="#5e6366" stroke="#6a6f72" />
      <g stroke="#3d4246">
        <circle cx="1910" cy="418" r="3.500" /><path d="M1908.500 416.500l3 3M1911.500 416.500l-3 3" />
        <circle cx="1910" cy="619" r="3.500" /><path d="M1908 619h4" />
        <path d="M1900 432.500h10.500V443a10.700 10.700 0 1 1-10.500-10.500z" /><circle cx="1900" cy="443" r="6" />
        <path d="M1896 496c-3-3-5-6-7.500-9.500 1-1.500 3-.5 5.500 2l-2-10c0-2 2.500-2 3 0l1.800 6.500-.5-9.500c0-2 2.600-2 2.900 0l.8 9 1.500-8.500c.4-1.800 2.800-1.500 2.600.4l-.8 9 2.500-5.500c1-1.600 2.900-.6 2.400 1l-3 11.500-2 3.600z" />
        <path d="M1889 503l18 14M1889 518l14-14M1888.500 508v-5.500h5.500M1903 503h-5M1903 503v5M1888.500 512v6h5" /><circle cx="1904" cy="518" r="5.300" /><path d="M1908 522l4 3" strokeWidth="2.500" />
        <path d="M1897.500 561v-14h-2.500l4.500-6 4.500 6h-2.500v14zM1896 549c-4 .5-7 2-7 4 0 6 21 6 21 0 0-2-3-3.500-6-4M1891 556l4 4M1891 556l5-1" />
        <path d="M1888.500 582.500h6v6h-6zM1896.500 582.500h6v6h-6zM1904.500 582.500h6v6h-6zM1888.500 591.500h16v13h-16z" /><path d="M1893 594l8 4-8 4z" fill="#3d4246" stroke="none" />
        <path d="M1898 462h5l-2.500 2.500zM1898 532h5l-2.500 2.500zM1898 570h5l-2.500 2.500z" fill="#3d4246" />
      </g>
    </svg>
  );
}

function Canvas() {
  return (
    <div className="relative h-[834px] overflow-hidden bg-[#212830]">
      <Drawing />
      <div className="absolute left-[3px] top-[6px] flex">
        <T w={125} className="text-[12px] leading-[16px] text-[#e8eaec]">[−][Top][2D Wireframe]</T>
      </div>
      <div className="absolute right-3 top-[10px] flex items-end gap-[10px]">
        <div className="mb-[0px] h-[3px] w-[10px] bg-white" />
        <Svg w={10} h={10}><path d="M3 3V1h6.500v6.500H8M1 3.500h6v6H1z" stroke="#fff" strokeWidth="1.600" /></Svg>
        <Svg w={9} h={9}><path d="M1 0l7 8M8 0L1 8" stroke="#fff" strokeWidth="2.200" /></Svg>
      </div>
      <div className="absolute bottom-px left-[111px] flex h-[25px] w-[1332px] items-stretch">
        <div className="flex w-14 items-center bg-[#2a303b]">
          <Svg w={6} h={18} className="ml-1">
            <path d="M1 0v18M4.500 0v18" stroke="#b4b9c1" strokeWidth="1.500" strokeDasharray="1.500 1.500" />
          </Svg>
          <Cross className="ml-[5px]" />
          <Svg w={15} h={14} className="ml-[12px]">
            <path d="M1 13l7-7" strokeWidth="2.500" /><path d="M12.500 1C9.500 0 7 2.500 8 5.500c2 2.500 6 1 6-2L11.500 5 10 3.500z" fill={GREY} stroke="none" />
          </Svg>
        </div>
        <div className="flex flex-1 items-center rounded-sm bg-[#bcbdbf]">
          <Svg w={16} h={13} className="ml-1"><path d="M.6.6h14.500v11.500H.6z" stroke="#444" /><path d="M.6 2h14.500" stroke="#444" strokeWidth="2" /><path d="M2.500 5l3 2-3 2M6 10h4" stroke="#444" /></Svg>
          <svg width="8" height="4" viewBox="0 0 8 4" className="ml-[2px]"><path d="M0 0h8L4 4z" fill="#555" /></svg>
          <T w={98} className="ml-[7px] font-['DejaVu_Sans_Mono',monospace] text-[11.5px] italic text-[#5c5e62]">Type a command</T>
          <svg width="6" height="4" viewBox="0 0 6 4" className="ml-auto mr-1"><path d="M0 4h6L3 0z" fill="#666" /></svg>
        </div>
      </div>
    </div>
  );
}

/* ---------- layout tabs and status bar ---------- */

function LayoutTab({ children, active, w, box }: { children: string; active?: boolean; w: number; box: string }) {
  return (
    <div className={`flex h-[17px] items-center justify-center rounded-b-[8px] pb-px ${box} ${active ? "bg-[#3b4453]" : "bg-[#2d3541]"}`}>
      <T w={w} className={active ? "text-[12px] leading-4 font-bold text-white" : "text-[12px] leading-4 text-[#b4b9c1]"}>{children}</T>
    </div>
  );
}

function StatusBar() {
  const plane = <path d="M8 0l2 8 5 6-5.500-2L8 15l-1.500-3L1 14l5-6z" fill={GREY} stroke="none" />;
  return (
    <div className="flex h-[29px] border-t border-[#3b424d] bg-[#222831]">
      <div className="flex gap-[4px] pl-[13px]">
        <LayoutTab active w={35} box="w-[55px]">Model</LayoutTab>
        <LayoutTab w={42} box="w-[60px]">Layout1</LayoutTab>
        <LayoutTab w={42} box="w-[62px]">Layout2</LayoutTab>
        <div className="ml-[2px] flex h-4 w-[22px] items-center justify-center rounded-b-md bg-[#2d3541]">
          <Svg w={8} h={8}><path d="M4 0v8M0 4h8" strokeWidth="1.700" stroke="#b4b9c1" /></Svg>
        </div>
      </div>
      <div className="ml-auto mt-px flex h-6 items-stretch">
        <div className="flex w-[47px] items-center justify-center bg-[#3b4453]"><T w={41} className="text-[12px] text-[#e8eaec]">MODEL</T></div>
        <div className="ml-[4px] flex w-[22px] items-center justify-center bg-[#6594c8]"><Svg><path d="M3 0v16M8 0v16M13 0v16M0 3h16M0 8h16M0 13h16" stroke="#fff" /></Svg></div>
        <div className="flex w-[42px] items-center bg-[#3b4453]">
          <Svg w={14} h={14} className="ml-[6px]"><path d="M1 1.500h13M1 7h13M1 12.500h13" strokeWidth="2" strokeDasharray="2 3.500" /></Svg>
          <Down className="ml-[9px]" s={8} />
        </div>
        <div className="ml-[3px] flex w-[22px] items-center justify-center bg-[#6594c8]"><Svg><path d="M1 0v14.500h15M1 9h6v5" stroke="#fff" strokeWidth="1.400" /></Svg></div>
        <div className="flex w-[82px] items-center bg-[#3b4453]">
          <Svg className="ml-1"><path d="M11 3.500A6 6 0 1 0 13 8.500" /><path d="M7 8.500h9M7 8.500L15 1M10 4.500q2.500 2 2.500 6" /></Svg>
          <Down className="ml-[10px]" s={8} />
          <Svg className="ml-[8px]"><path d="M1 2l14 13" stroke="#d6606e" strokeWidth="1.500" /><path d="M8 0v16" stroke="#4fb37a" strokeWidth="1.500" /><rect x="6.500" y="6.500" width="3" height="3" fill="#3b4453" /></Svg>
          <Down className="ml-[7px]" s={8} />
        </div>
        <div className="ml-px flex w-6 items-center justify-center bg-[#3b4453]"><Svg><path d="M16 13.500H1L13 2.500M7 8.500l4 3.500" strokeWidth="1.400" /></Svg></div>
        <div className="flex w-[22px] items-center justify-center bg-[#6594c8]"><Svg><path d="M7 2h8.500v13H2V7" stroke="#fff" strokeWidth="1.400" /><rect x="0" y="0" width="4.500" height="4.500" stroke="#fff" /></Svg></div>
        <div className="flex w-[17px] items-center bg-[#3b4453] pl-[5px]"><Down s={8} /></div>
        <div className="ml-[3px] flex w-[23px] items-center justify-center bg-[#6594c8]"><Svg><path d="M7 1l2 7 5 6-5.500-2L7 15l-1.500-3L0 14l5-6z" fill="#fff" stroke="none" /><circle cx="13" cy="4" r="2.600" stroke="#fff" /></Svg></div>
        <div className="flex w-[83px] items-center bg-[#3b4453]">
          <Svg className="ml-[5px]">{plane}<path d="M13 0l-3 4h2l-1 4 4-5h-2l1-3z" fill={GREY} stroke="none" /></Svg>
          <Svg className="ml-[8px]">{plane}</Svg>
          <T w={14} className="ml-2 text-[11.5px] text-[#e8eaec]">1:1</T>
          <Down className="ml-[4px]" s={8} />
        </div>
        <div className="ml-[3px] flex w-[40px] items-center bg-[#3b4453]">
          <Svg className="ml-[4px]"><circle cx="8" cy="8" r="4" strokeWidth="3.500" /><circle cx="8" cy="8" r="6.500" strokeWidth="2.600" strokeDasharray="2.600 2.500" /></Svg>
          <Down className="ml-[8px]" s={8} />
        </div>
        <div className="ml-px flex w-6 items-center justify-center bg-[#3b4453]"><Svg><path d="M8 0v16M0 8h16" strokeWidth="1.600" /></Svg></div>
        <div className="ml-[3px] flex w-6 items-center justify-center bg-[#3b4453]"><Svg><rect x=".5" y=".5" width="6" height="6" /><circle cx="12.500" cy="6.500" r="3" /><path d="M6.500 10l3.500 6H3z" /></Svg></div>
        <div className="ml-[3px] flex w-[22px] items-center justify-center bg-[#3b4453]"><Svg><circle cx="9" cy="6.500" r="6" fill="#2f6db5" stroke="none" /><path d="M2 0v8M0 4h9" stroke="#e8f0fa" /><rect x="0" y="8.500" width="6" height="6" fill="#f3b52e" stroke="none" /><path d="M6.500 11l3.500 4 6-7" stroke="#46b254" strokeWidth="2.600" /></Svg></div>
        <div className="ml-[3px] flex w-[48px] items-center bg-[#3b4453]">
          <Svg className="ml-1"><rect x=".6" y="2" width="15" height="12" /><path d="M9 5h4v4M13 5l-3 3M7 11.500H3.500V8M3.500 11.500l3-3" /></Svg>
          <Svg className="ml-[8px]"><path d="M0 2h16M0 8h16M0 14h16" strokeWidth="2" /></Svg>
        </div>
        <div className="w-0.5" />
      </div>
    </div>
  );
}

/* ---------- Windows taskbar ---------- */

function Task({ w, bar, active, children }: { w: string; bar?: string; active?: boolean; children: React.ReactNode }) {
  return (
    <div className={`relative flex h-10 shrink-0 items-center justify-center ${w} ${active ? "bg-[#4a4d60]" : ""}`}>
      {children}
      {bar && <div className={`absolute bottom-0 h-[2px] bg-[#76b9ed] ${bar}`} />}
    </div>
  );
}

function Taskbar() {
  return (
    <div className="flex h-10 items-center bg-linear-to-r from-[#171827] via-[#1b1e34] to-[#1d191d] text-white">
      <div className="flex w-12 justify-center">
        <Svg><path d="M0 2.300l7-1V7.500H0zM8 1.200L16 0v7.500H8zM0 8.500h7v6.200l-7-1zM8 8.500h8V16l-8-1.200z" fill="#fff" stroke="none" /></Svg>
      </div>
      <div className="flex h-10 w-[344px] items-center border border-[#5d5d5d] bg-[#333333]">
        <Svg w={16} h={16} className="ml-[11px]"><circle cx="10" cy="5.500" r="5" stroke="#e5e5e5" strokeWidth="1.400" /><path d="M6.500 9L0 15.500" stroke="#e5e5e5" strokeWidth="1.400" /></Svg>
        <T w={128} className="ml-3 mt-px text-[14.5px] text-[#dcdcdc]">Type here to search</T>
      </div>
      <Task w="w-12"><Svg><circle cx="8" cy="8" r="6.800" stroke="#fff" strokeWidth="2" /></Svg></Task>
      <Task w="w-12"><Svg><path d="M1 0v3h9V0M1 16v-3h9v3M1 5h9v6H1zM14 0v3M14 9v7" stroke="#fff" /><rect x="13" y="4" width="3" height="3" fill="#fff" stroke="none" /></Svg></Task>
      <Task w="w-[49px]" bar="left-[7px] w-10">
        <Svg w={22} h={20} className="ml-[5px]"><path d="M0 1h9l1.500 2H22v16H0z" fill="#f7cf5f" stroke="none" /><path d="M0 1h9l1.500 2H0z" fill="#d59a1e" stroke="none" /><path d="M4 19v-6q0-2 2-2h10q2 0 2 2v6h-4v-3H8v3z" fill="#3d95d6" stroke="none" /></Svg>
      </Task>
      <Task w="w-[49px]" bar="left-[7px] w-10">
        <svg width="22" height="22" viewBox="-11 -11 22 22" className="ml-[5px]">
          <circle r="11" fill="#f4c430" />
          <path d="M0-5H9.800A11 11 0 0 0-9.500-5.500L-4.500 2.500A5 5 0 0 1 0-5z" fill="#db4437" />
          <path d="M-9.500-5.500A11 11 0 0 0 0 11L4.500 2.500A5 5 0 0 1-4.500 2.500z" fill="#1f9d57" />
          <circle r="5" fill="#fff" /><circle r="4" fill="#4a86ea" />
        </svg>
      </Task>
      <Task w="w-[49px]">
        <Svg w={22} h={22} className="ml-[4px]"><path d="M1 3l3-2.500h13l3 2.500v17l-3 1.500H5L1 18z" fill="#222" stroke="#aaa" strokeWidth=".8" /><path d="M5 4.500h16V21H5z" fill="#fff" stroke="none" /><text x="13" y="18" textAnchor="middle" fontSize="14" fontWeight="700" fontFamily='"Liberation Serif", serif' fill="#111" stroke="none">N</text></Svg>
      </Task>
      <Task w="w-[49px]">
        <Svg w={24} h={24} className="ml-[5px]"><path d="M13 1.800A10.300 10.300 0 1 0 22.300 13" stroke="#4b6be0" strokeWidth="3" /><path d="M7.500 11l4 4L20 5" stroke="#ffb31f" strokeWidth="3" /></Svg>
      </Task>
      <Task w="w-[52px]" bar="left-[7px] w-10">
        <svg width="24" height="24" viewBox="0 0 24 24" className="ml-[2px]">
          <defs><linearGradient id="ring" x1="0" y1="0" x2="0" y2="1"><stop offset="0" stopColor="#f08a4b" /><stop offset="1" stopColor="#9b6bd6" /></linearGradient></defs>
          <circle cx="12" cy="12" r="10.800" fill="#3a3a3f" stroke="url(#ring)" strokeWidth="2" /><circle cx="12" cy="12" r="4.200" fill="#fff" /><circle cx="12" cy="12" r="1.300" fill="#333" /><path d="M18 7l4 2" stroke="#f08a4b" strokeWidth="2" />
        </svg>
      </Task>
      <Task w="w-[45px]" bar="left-0 w-[48px]" active>
        <div className="ml-[3px] flex size-6 items-center justify-center bg-[#f8e9e2]"><ALogo w={17} h={19} /></div>
        <div className="absolute -right-1 top-0 h-[38px] w-[3px] bg-[#363849]" />
      </Task>
      <Task w="w-[52px]" bar="left-[8px] w-[37px]">
        <Svg w={22} h={20} className="ml-[6px]"><rect width="22" height="20" fill="#c4120c" stroke="none" /><path d="M5 16c3-1 6-6 6-12 0 5 2 8 7 8.500-5-.5-9 .5-12 3.500" stroke="#fff" strokeWidth="1.300" /></Svg>
      </Task>
      <div className="ml-auto flex h-10 items-center">
        <Svg w={13} h={8}><path d="M.8 7L6.500 1.300 12.200 7" stroke="#fff" strokeWidth="1.400" /></Svg>
        <Svg w={17} h={11} className="ml-[9px]"><path d="M3.500 10.500a3 3 0 0 1-.5-6 5 5 0 0 1 9-1 3.600 3.600 0 0 1 1.500 7z" fill="#f0f0f0" stroke="none" /></Svg>
        <Svg w={14} h={14} className="ml-[10px]"><circle cx="11.500" cy="12" r="1.500" fill="#fff" stroke="none" /><path d="M8 13a5 5 0 0 1 5-5M4.500 13a8.500 8.500 0 0 1 8.500-8.500M1 13A12 12 0 0 1 13 1" stroke="#ddd" strokeWidth="1.300" /></Svg>
        <Svg w={17} h={14} className="ml-[7px]"><path d="M.6 5h2.800L7 1.500v11L3.400 9H.6zM9 4.500q1.500 2.500 0 5M11.500 3q2.500 4 0 8" stroke="#fff" /><path d="M14 1.500q3.200 5.500 0 11" stroke="#888" /></Svg>
        <T w={23} className="ml-[10px] text-[12px]">ENG</T>
        <div className="ml-[12px] flex w-[60px] flex-col items-center">
          <T w={48} className="text-[12px] leading-[18px]">01:58 PM</T>
          <T w={58} className="text-[12px] leading-[18px]">28-04-2021</T>
        </div>
        <div className="relative ml-[17px] h-10 w-6">
          <Svg w={16} h={16} className="absolute left-0 top-[12px]"><path d="M0 0h16v12h-4v3.500L8 12H0z" fill="#fff" stroke="none" /><path d="M2.500 3.500h11M2.500 6h11M2.500 8.500h7" stroke="#222" /></Svg>
          <div className="absolute left-[8px] top-5 flex size-4 items-center justify-center rounded-full border border-[#999] bg-[#2d2d30] text-[11px]">1</div>
        </div>
        <div className="ml-3 mr-1 h-10 w-px bg-[#55565c]" />
      </div>
    </div>
  );
}

export default function App() {
  return (
    <div className="flex h-[1080px] w-[1920px] flex-col overflow-hidden bg-[#222831] font-['Open_Sans','Noto_Sans',sans-serif]">
      <TitleBar />
      <MenuTabs />
      <Ribbon />
      <DocTabs />
      <div className="h-1 bg-[#3b4453]" />
      <Canvas />
      <StatusBar />
      <Taskbar />
    </div>
  );
}
